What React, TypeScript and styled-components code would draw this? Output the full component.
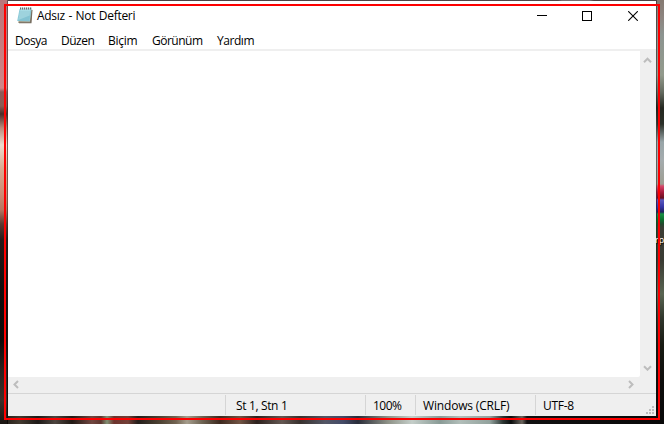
import React from 'react';
import styled, { createGlobalStyle } from 'styled-components';

const GlobalStyle = createGlobalStyle`
  html, body { margin: 0; padding: 0; overflow: hidden; }
  * { box-sizing: border-box; }
`;

const Desktop = styled.div`
  position: relative;
  width: 664px;
  height: 424px;
  padding: 1px 8px 8px;
  overflow: hidden;
  font: 12px/16px 'Open Sans', 'Noto Sans', sans-serif;
  color: #000;
  background:
    linear-gradient(90deg, #4b4243 0 160px, #514748 550px, #777072 554px 582px, #4b4243 586px) 8px 0 / 648px 1px no-repeat,
    linear-gradient(180deg, #b9767a 0, #c87e80 55px, #cf8587 88px, #8d5a56 92px, #8a5c52 106px, #4a2c27 114px, #b98c7c 128px, #ecdccd 145px, #d9ab91 168px, #cc8a72 195px, #b5755f 210px, #5c3a30 224px, #241a18 240px, #100d0c 290px, #0c0908 340px, #29211d 370px, #3b3029 400px, #1a1512 424px) 0 0 / 7px 424px no-repeat,
    linear-gradient(180deg, #6e4b4d 0, #70494a 88px, #3b2422 110px, #72584e 145px, #765144 200px, #1c1412 240px, #0c0908 424px) 7px 0 / 1px 424px no-repeat,
    linear-gradient(180deg, #4d4845 0, #545852 75px, #1c201b 108px, #5c6463 142px, #605f57 184px, #6d1f32 192px, #25255f 207px, #124a24 220px, #24271f 260px, #151812 345px, #080808 424px) 656px 0 / 1px 424px no-repeat,
    linear-gradient(180deg, #857a72 0, #8d8580 18px, #8c9490 35px, #929a8c 75px, #646b60 92px, #242820 108px, #2b3029 124px, #98a5a8 142px, #a4acae 160px, #9d9d92 184px, #d7486b 186px, #a91b3d 192px, #68101f 198px, #5959bf 200px, #3535a4 207px, #20205b 212px, #189145 214px, #0c6d2b 220px, #23482d 224px, #3b3d34 228px, #393b33 260px, #596552 294px, #30372c 318px, #181b13 345px, #0e0e0c 380px, #080808 424px) 656px 0 / 8px 424px no-repeat,
    linear-gradient(90deg, #1b1713 0, #42392f 20px, #1d1a17 38px, #4d453f 55px, #211914 72px, #714740 92px, #5d352e 101px, #829174 107px, #6d332d 114px, #733f37 128px, #231e1a 138px, #4d4233 160px, #726451 176px, #a59d8c 187px, #6e6453 202px, #3d291e 220px, #715444 240px, #2c211d 257px, #645852 282px, #38312e 300px, #535665 325px, #444b68 343px, #292d3a 358px, #8e9287 388px, #c4cec9 412px, #899b96 440px, #b1beb9 460px, #92a29d 490px, #2b3532 503px, #0a0d0d 511px, #6b665e 522px, #111 527px, #080808 664px) 0 416px / 664px 8px no-repeat,
    #161310;
`;

const Window = styled.main`
  display: grid;
  grid-template-rows: 29px 21px minmax(0, 1fr) 23px;
  width: 648px;
  height: 415px;
  background: #fff;
`;

const TitleBar = styled.header`
  display: flex;
  align-items: center;
  padding: 0 0 0 9px;
`;

const Title = styled.h1<{ $spacing: number }>`
  margin: 0 0 0 4px;
  flex: 1;
  font: inherit;
  letter-spacing: ${({ $spacing }) => $spacing}px;
  word-spacing: 0.8px;
  white-space: nowrap;
`;

const WindowControls = styled.div`
  display: flex;
  height: 100%;
`;

const ControlButton = styled.button<{ $width?: number }>`
  display: grid;
  place-items: center;
  width: ${({ $width = 45 }) => $width}px;
  padding: 0;
  border: 0;
  background: none;
`;

const MenuBar = styled.nav`
  display: flex;
  padding: 3px 0 0 7px;
  border-bottom: 2px solid #efefef;
`;

const MenuItem = styled.span<{ $width: number; $spacing: number }>`
  width: ${({ $width }) => $width}px;
  letter-spacing: ${({ $spacing }) => $spacing}px;
  white-space: nowrap;
`;

const Editor = styled.section`
  display: grid;
  grid-template-columns: minmax(0, 1fr) 16px;
  grid-template-rows: minmax(0, 1fr) 16px;
  background: #efefef;
`;

const TextArea = styled.textarea`
  width: 100%;
  height: 100%;
  padding: 2px;
  border: 0;
  border-bottom-right-radius: 2px;
  outline: 0;
  resize: none;
  background: #fff;
`;

const ScrollBar = styled.div<{ $vertical?: boolean }>`
  display: flex;
  flex-direction: ${({ $vertical }) => ($vertical ? 'column' : 'row')};
  justify-content: space-between;
  align-items: center;
  padding: ${({ $vertical }) => ($vertical ? '6px 1px 6px 0' : '0 6px 1px 5px')};
  svg { display: block; }
`;

const StatusBar = styled.footer`
  position: relative;
  display: grid;
  grid-template-columns: 217px 140px 50px 120px 1fr;
  padding-top: 1px;
  border-top: 1px solid #d5d5d5;
  background: #efefef;
`;

const StatusCell = styled.span<{ $indent?: number; $spacing?: number }>`
  height: 20px;
  padding: 3px 0 0 ${({ $indent = 7 }) => $indent}px;
  letter-spacing: ${({ $spacing = 0 }) => $spacing}px;
  white-space: nowrap;
  & + & { border-left: 1px solid #d5d5d5; }
`;

const Grip = styled.svg`
  position: absolute;
  right: 2px;
  bottom: 2px;
`;

const Selection = styled.div`
  position: absolute;
  inset: 4px 4px 4px 4px;
  border: 2px solid #fd0000;
  pointer-events: none;
`;

const ShortcutLabel = styled.span`
  position: absolute;
  left: 655px;
  top: 233px;
  font: 9px/14px 'Open Sans', sans-serif;
  color: #fff;
  text-shadow: 1px 1px 1px #000;
`;

const NotepadIcon = () => (
  <svg width="16" height="17" viewBox="0 0 16 17" aria-hidden="true">
    <path d="M4 2.5h11.2L14 16H1.2z" fill="#a99b83" />
    <path d="M14.5 3h1L14.5 16.2H2v-.9h11z" fill="#756d61" />
    <path d="M2.5 2h12L12.8 14.6.2 14z" fill="#8dcbd9" />
    <path d="M3.3 3.2h10l-.7 5.4L1.4 13z" fill="#b2e2e9" />
    <path d="M3 5h10.6M2.6 7h10.6M2.2 9h10.6M1.8 11h10.7M1.4 13h10.7" stroke="#70b4c5" strokeWidth=".6" />
    <path d="M3 1.5h12" stroke="#cbd5d7" strokeWidth="2" />
    <path d="M3.5.5v2M5.5.5v2M7.5.5v2M9.5.5v2M11.5.5v2M13.5.5v2" stroke="#536168" strokeWidth=".9" />
  </svg>
);

const arrows = {
  up: 'M1 5.2 4.5 1.7 8 5.2',
  down: 'M1 1.2 4.5 4.7 8 1.2',
  left: 'M5 1 1.5 4.5 5 8',
  right: 'M1 1 4.5 4.5 1 8',
};

const Arrow = ({ direction }: { direction: keyof typeof arrows }) => {
  const vertical = direction === 'up' || direction === 'down';
  return (
    <svg width={vertical ? 9 : 6} height={vertical ? 6 : 9} aria-hidden="true">
      <path d={arrows[direction]} fill="none" stroke="#bdbdbd" strokeWidth="2" />
    </svg>
  );
};

const menus = [
  { label: 'Dosya', width: 46, spacing: -0.5 },
  { label: 'Düzen', width: 47, spacing: -0.5 },
  { label: 'Biçim', width: 44, spacing: -0.25 },
  { label: 'Görünüm', width: 65, spacing: -0.5 },
  { label: 'Yardım', width: 50, spacing: -0.45 },
];

export default function App() {
  return (
    <>
      <GlobalStyle />
      <Desktop>
        <ShortcutLabel>rp</ShortcutLabel>
        <Window>
          <TitleBar>
            <NotepadIcon />
            <Title $spacing={-0.3}>Adsız - Not Defteri</Title>
            <WindowControls>
              <ControlButton aria-label="Simge durumuna küçült">
                <svg width="10" height="11" shapeRendering="crispEdges"><path d="M0 5.5h10" stroke="#000" /></svg>
              </ControlButton>
              <ControlButton aria-label="Ekranı kapla">
                <svg width="10" height="10" shapeRendering="crispEdges"><path d="M.5.5h9v9h-9z" fill="none" stroke="#000" /></svg>
              </ControlButton>
              <ControlButton aria-label="Kapat" $width={47}>
                <svg width="10" height="10"><path d="m.2.2 9.6 9.6M9.8.2.2 9.8" stroke="#000" strokeWidth="1.1" /></svg>
              </ControlButton>
            </WindowControls>
          </TitleBar>
          <MenuBar>
            {menus.map(({ label, width, spacing }) => (
              <MenuItem key={label} $width={width} $spacing={spacing}>{label}</MenuItem>
            ))}
          </MenuBar>
          <Editor>
            <TextArea aria-label="Metin" />
            <ScrollBar $vertical><Arrow direction="up" /><Arrow direction="down" /></ScrollBar>
            <ScrollBar><Arrow direction="left" /><Arrow direction="right" /></ScrollBar>
          </Editor>
          <StatusBar>
            <StatusCell />
            <StatusCell $indent={10} $spacing={-0.35}>St 1, Stn 1</StatusCell>
            <StatusCell $spacing={-0.5}>100%</StatusCell>
            <StatusCell $spacing={-0.17}>Windows (CRLF)</StatusCell>
            <StatusCell $spacing={-0.3}>UTF-8</StatusCell>
            <Grip width="8" height="8" shapeRendering="crispEdges" aria-hidden="true">
              <path d="M6 0h2v2H6zM3 3h2v2H3zM6 3h2v2H6zM0 6h2v2H0zM3 6h2v2H3zM6 6h2v2H6z" fill="#bdbdbd" />
            </Grip>
          </StatusBar>
        </Window>
        <Selection />
      </Desktop>
    </>
  );
}
